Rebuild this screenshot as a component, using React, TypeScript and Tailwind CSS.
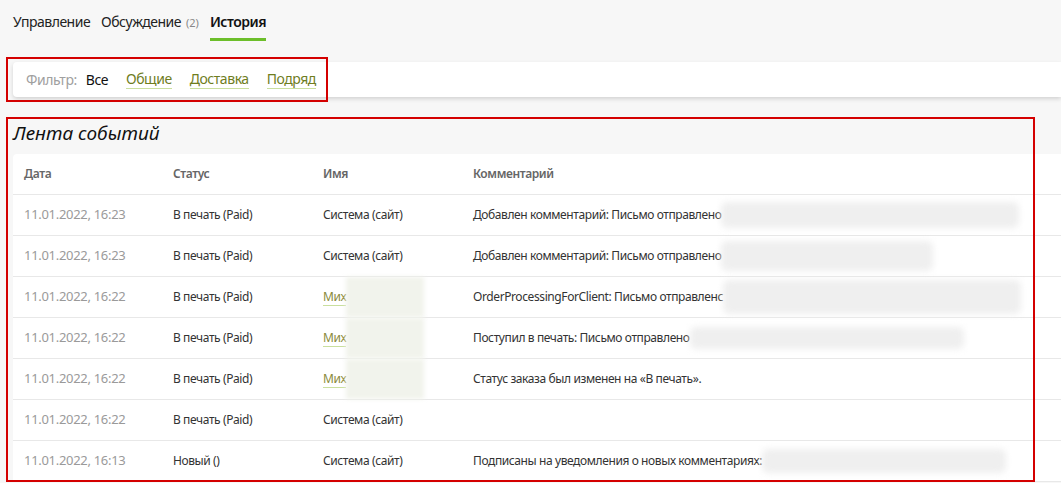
const font = { fontFamily: '"Noto Sans", "Open Sans", sans-serif' };

type Row = {
  date: string;
  status: string;
  name: string;
  masked?: boolean;
  comment: string;
  blur?: string;
};

const rows: Row[] = [
  { date: "11.01.2022, 16:23", status: "В печать (Paid)", name: "Система (сайт)", comment: "Добавлен комментарий: Письмо отправлено", blur: "w-[298px] h-[26px]" },
  { date: "11.01.2022, 16:23", status: "В печать (Paid)", name: "Система (сайт)", comment: "Добавлен комментарий: Письмо отправлено", blur: "w-[212px] h-[30px]" },
  { date: "11.01.2022, 16:22", status: "В печать (Paid)", name: "Мих", masked: true, comment: "OrderProcessingForClient: Письмо отправленс", blur: "w-[298px] h-[34px]" },
  { date: "11.01.2022, 16:22", status: "В печать (Paid)", name: "Мих", masked: true, comment: "Поступил в печать: Письмо отправлено", blur: "w-[274px] h-[22px]" },
  { date: "11.01.2022, 16:22", status: "В печать (Paid)", name: "Мих", masked: true, comment: "Статус заказа был изменен на «В печать»." },
  { date: "11.01.2022, 16:22", status: "В печать (Paid)", name: "Система (сайт)", comment: "" },
  { date: "11.01.2022, 16:13", status: "Новый ()", name: "Система (сайт)", comment: "Подписаны на уведомления о новых комментариях:", blur: "w-[244px] h-[24px]" },
];

export default function App() {
  return (
    <div className="w-[1061px] h-[483px] overflow-hidden bg-[#f7f7f7] relative" style={font}>
      {/* Tabs */}
      <div className="flex items-start gap-[11px] pl-[13px] pt-[11px] h-[62px] text-[14px] tracking-[-0.5px] text-[#222]">
        <div className="leading-[22px]">Управление</div>
        <div className="leading-[22px] flex items-baseline">
          Обсуждение<span className="ml-[5px] text-[11px] tracking-normal text-[#888]">(2)</span>
        </div>
        <div className="flex flex-col">
          <span className="leading-[22px] font-semibold text-[#111]">История</span>
          <span className="mt-[5px] h-[3px] bg-[#6cbe2a]" />
        </div>
      </div>

      {/* Filter */}
      <div className="ml-[13px] h-[35px] bg-white rounded-l-[4px] shadow-[0_2px_4px_rgba(0,0,0,0.15)] flex items-center pl-[13px] gap-[18px] text-[14px] tracking-[-0.45px]">
        <span className="text-[#a0a0a0] -mr-[9px]">Фильтр:</span>
        <span className="text-[#111]">Все</span>
        <span className="text-[#6f7d1e] border-b border-[#c9df9e] leading-[18px]">Общие</span>
        <span className="text-[#6f7d1e] border-b border-[#c9df9e] leading-[18px]">Доставка</span>
        <span className="text-[#6f7d1e] border-b border-[#c9df9e] leading-[18px]">Подряд</span>
      </div>

      {/* Feed */}
      <div className="mt-[23px] ml-[13px] text-[19px] italic text-[#111] leading-[26px]">Лента событий</div>
      <div className="mt-[8px] ml-[13px] bg-white rounded-tl-[4px] text-[12px] tracking-[-0.4px]">
        <div className="grid grid-cols-[149px_150px_150px_1fr] h-[41px] items-center border-b border-[#e8e8e8] pl-[11px] font-semibold text-[#666]">
          <span>Дата</span>
          <span>Статус</span>
          <span>Имя</span>
          <span>Комментарий</span>
        </div>
        {rows.map((r, i) => (
          <div key={i} className="grid grid-cols-[149px_150px_150px_1fr] h-[41px] items-center border-b border-[#e8e8e8] pl-[11px] text-[#333]">
            <span className="text-[13px] tracking-[-0.3px] text-[#9a9a9a]">{r.date}</span>
            <span>{r.status}</span>
            {r.masked ? (
              <span className="flex items-center h-full">
                <span className="text-[#8a8a3a] border-b border-[#c9df9e] leading-[16px]">{r.name}</span>
                <span className="w-[78px] h-full bg-[#f1f3ec] blur-[2px]" />
              </span>
            ) : (
              <span>{r.name}</span>
            )}
            <span className="flex items-center h-full whitespace-nowrap">
              {r.comment}
              {r.blur && <span className={`${r.blur} bg-[#efefef] blur-[3px] rounded-[6px]`} />}
            </span>
          </div>
        ))}
      </div>

      {/* annotation frames */}
      <div className="absolute left-[6px] top-[57px] w-[322px] h-[45px] border-2 border-[#d40000] pointer-events-none" />
      <div className="absolute left-[6px] top-[117px] w-[1029px] h-[365px] border-2 border-[#d40000] pointer-events-none" />
    </div>
  );
}
